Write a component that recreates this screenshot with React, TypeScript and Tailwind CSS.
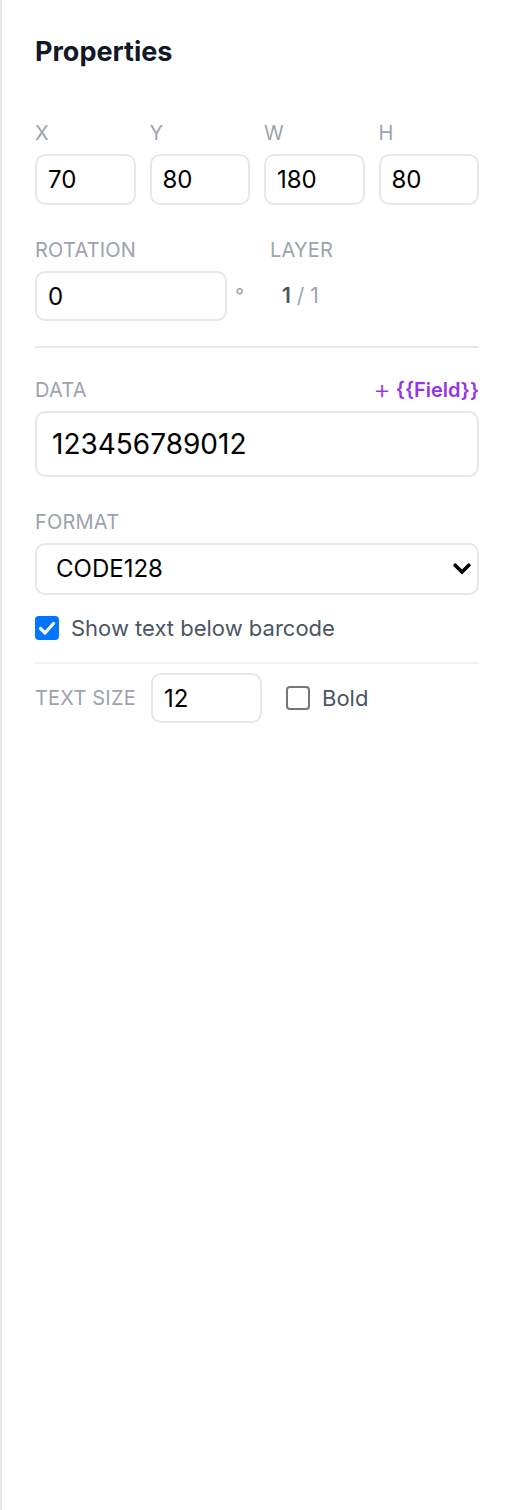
import React from "react";

const labelCls = "block whitespace-nowrap text-[20px] leading-[28px] tracking-[0.01em] uppercase text-[#9ca3af]";
const inputCls =
  "block rounded-[10px] border-2 border-[#e5e7eb] bg-white text-black outline-none";

function NumField({ label, value }: { label: string; value: string }) {
  return (
    <div className="flex flex-col">
      <span className={labelCls}>{label}</span>
      <input
        readOnly
        value={value}
        className={`${inputCls} mt-[7px] h-[51px] w-full px-[11px] text-[24px]`}
      />
    </div>
  );
}

function CheckedBox() {
  return (
    <span className="flex h-[24px] w-[24px] shrink-0 items-center justify-center rounded-[4px] bg-[#0075ff]">
      <svg width="24" height="24" viewBox="0 0 24 24" fill="none">
        <polyline
          points="5.5,12.5 10,17 18.5,7.5"
          stroke="white"
          strokeWidth="3.2"
          strokeLinecap="round"
          strokeLinejoin="round"
        />
      </svg>
    </span>
  );
}

function EmptyBox() {
  return (
    <span className="block h-[24px] w-[24px] shrink-0 rounded-[4px] border-2 border-[#767676] bg-white" />
  );
}

export default function App() {
  return (
    <div
      className="min-h-screen border-l-2 border-[#e5e7eb] bg-white px-[33px] pt-[31px]"
      style={{ fontFamily: "Inter, 'Noto Sans', sans-serif" }}
    >
      <h2 className="text-[27px] font-bold leading-[42px] text-[#111827]">Properties</h2>

      <div className="mt-[46px] grid grid-cols-4 gap-x-[14px]">
        <NumField label="X" value="70" />
        <NumField label="Y" value="80" />
        <NumField label="W" value="180" />
        <NumField label="H" value="80" />
      </div>

      <div className="mt-[31px] flex">
        <div className="flex w-[222px] shrink-0 flex-col">
          <span className={labelCls}>Rotation</span>
          <div className="mt-[7px] flex items-center">
            <input
              readOnly
              value="0"
              className={`${inputCls} h-[50px] w-[192px] px-[11px] text-[24px]`}
            />
            <span className="ml-[8px] text-[20px] leading-none text-[#9ca3af]">°</span>
          </div>
        </div>
        <div className="ml-[13px] flex flex-col">
          <span className={labelCls}>Layer</span>
          <div className="mt-[7px] flex h-[50px] items-center pl-[12px] text-[21px]">
            <span className="font-semibold text-[#4b5563]">1</span>
            <span className="text-[#9ca3af]">&nbsp;/ 1</span>
          </div>
        </div>
      </div>

      <div className="mt-[25px] h-[2px] bg-[#e5e7eb]" />

      <div className="mt-[28px] flex h-[28px] items-center justify-between">
        <span className={labelCls}>Data</span>
        <span className="flex items-center text-[20px] font-semibold leading-[28px] text-[#9333ea]">
          <span className="text-[27px] font-light leading-[28px]">+</span>
          <span className="ml-[5px]">{"{{Field}}"}</span>
        </span>
      </div>
      <input
        readOnly
        value="123456789012"
        className={`${inputCls} mt-[7px] h-[66px] w-full px-[15px] text-[28px]`}
      />

      <span className={`${labelCls} mt-[31px]`}>Format</span>
      <div className="relative mt-[7px]">
        <select
          defaultValue="CODE128"
          className={`${inputCls} h-[52px] w-full appearance-none pl-[19px] pr-[40px] text-[24px]`}
        >
          <option>CODE128</option>
          <option>EAN13</option>
          <option>UPC</option>
        </select>
        <svg
          className="pointer-events-none absolute right-[8px] top-[20px]"
          width="18"
          height="12"
          viewBox="0 0 18 12"
          fill="none"
        >
          <polyline
            points="2.2,2.2 9,9 15.8,2.2"
            stroke="black"
            strokeWidth="3.6"
            strokeLinecap="round"
            strokeLinejoin="miter"
          />
        </svg>
      </div>

      <label className="mt-[21px] flex h-[24px] items-center gap-[12px]">
        <CheckedBox />
        <span className="whitespace-nowrap text-[22px] text-[#4b5563]">Show text below barcode</span>
      </label>

      <div className="mt-[22px] h-[2px] bg-[#f1f2f4]" />

      <div className="mt-[9px] flex items-center">
        <span className="w-[102px] shrink-0 whitespace-nowrap text-[20px] uppercase leading-[28px] tracking-[0.01em] text-[#9ca3af]">
          Text Size
        </span>
        <input
          readOnly
          value="12"
          className={`${inputCls} ml-[14px] h-[50px] w-[111px] shrink-0 px-[11px] text-[24px]`}
        />
        <span className="ml-[24px]">
          <EmptyBox />
        </span>
        <span className="ml-[12px] text-[22px] text-[#4b5563]">Bold</span>
      </div>
    </div>
  );
}
